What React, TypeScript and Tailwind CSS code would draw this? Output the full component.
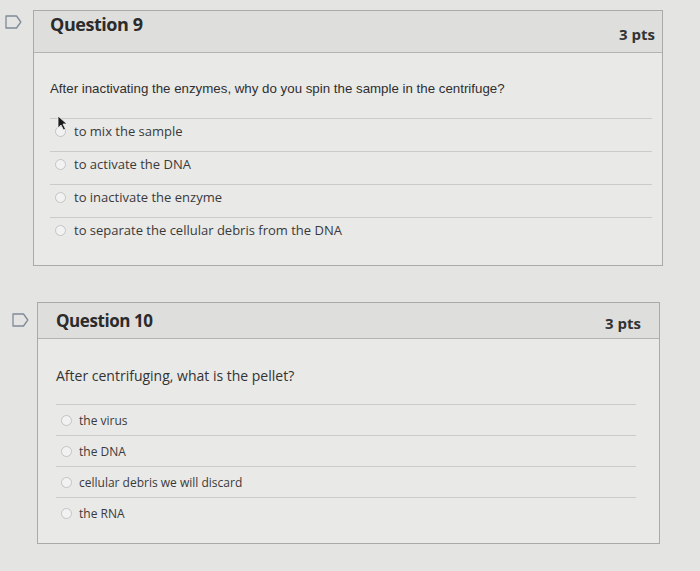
import React from "react";

interface QuestionProps {
  number: number;
  prompt: string;
  answers: string[];
  rowClass: string;
  flagClass: string;
  cardClass: string;
  headerClass: string;
  titleClass: string;
  bodyClass: string;
  promptClass: string;
  answerClass: string;
  rowHeight: string;
  showCursor?: boolean;
}

export default function App() {
  return (
    <div className="min-h-[571px] w-[700px] bg-[#e4e4e3] pt-[10px] font-['Open_Sans',sans-serif] text-[#3b3b3b]">
      <QuestionBlock
        number={9}
        prompt="After inactivating the enzymes, why do you spin the sample in the centrifuge?"
        answers={[
          "to mix the sample",
          "to activate the DNA",
          "to inactivate the enzyme",
          "to separate the cellular debris from the DNA",
        ]}
        rowClass="pl-[5px] gap-[11px]"
        flagClass="pt-[5px]"
        cardClass="w-[630px] h-[256px]"
        headerClass="h-[42px] pl-[16px] pr-[7px]"
        titleClass="text-[18px] -mt-[14px]"
        bodyClass="pl-[16px] pr-[10px] pt-[27px]"
        promptClass="font-['Liberation_Sans',Arial,sans-serif] text-[13.3px] leading-[18px] text-[#2f2f2f] mb-[20px]"
        answerClass="text-[13px] -mt-[7px] gap-[8px]"
        rowHeight="h-[33px]"
        showCursor
      />

      <div className="h-[36px]" />

      <QuestionBlock
        number={10}
        prompt="After centrifuging, what is the pellet?"
        answers={["the virus", "the DNA", "cellular debris we will discard", "the RNA"]}
        rowClass="pl-[12px] gap-[8px]"
        flagClass="pt-[11px]"
        cardClass="w-[623px] h-[242px]"
        headerClass="h-[36px] pl-[18px] pr-[18px]"
        titleClass="text-[17px]"
        bodyClass="pl-[18px] pr-[23px] pt-[27px]"
        promptClass="text-[14px] leading-[20px] text-[#333] mb-[18px]"
        answerClass="text-[12px] mt-[1px] gap-[7px]"
        rowHeight="h-[31px]"
      />
    </div>
  );
}

/* ------------------------------- COMPONENTS ------------------------------- */

function QuestionBlock(props: QuestionProps) {
  return (
    <div className={`flex items-start ${props.rowClass}`}>
      <div className={`${props.flagClass} flex-shrink-0`}>
        <FlagIcon />
      </div>

      <div className={`${props.cardClass} bg-[#e9e9e8] border border-[#aaaaaa] flex flex-col`}>
        {/* Header */}
        <div
          className={`${props.headerClass} bg-[#dededd] border-b border-[#b3b3b3] flex items-center justify-between`}
        >
          <span className={`${props.titleClass} font-bold text-[#2b2b2b] tracking-tight`}>
            Question {props.number}
          </span>
          <span className="text-[15px] font-bold text-[#333] mt-[6px]">3 pts</span>
        </div>

        {/* Body */}
        <div className={props.bodyClass}>
          <p className={props.promptClass}>{props.prompt}</p>

          <div className="flex flex-col">
            {props.answers.map((answer, idx) => (
              <div
                key={idx}
                className={`${props.rowHeight} relative flex items-center pl-[5px] border-t border-[#cbcbca]`}
              >
                <label className={`${props.answerClass} flex items-center text-[#3a3a3a]`}>
                  <span className="w-[11px] h-[11px] rounded-full border border-[#c4c4c4] bg-[#f2f2f2] flex-shrink-0" />
                  <span>{answer}</span>
                </label>

                {props.showCursor && idx === 0 && (
                  <svg
                    className="absolute left-[7px] top-[-4px]"
                    width="11"
                    height="16"
                    viewBox="0 0 11 16"
                  >
                    <path d="M1 1 L1 13 L4 10 L6.5 15 L8.5 14 L6 9 L10 9 Z" fill="#1a1a1a" stroke="#f2f2f2" strokeWidth="0.8" />
                  </svg>
                )}
              </div>
            ))}
          </div>
        </div>
      </div>
    </div>
  );
}

function FlagIcon() {
  return (
    <svg width="17" height="14" viewBox="0 0 17 14" fill="none">
      <path d="M1 1 H11.5 L15.8 7 L11.5 13 H1 Z" stroke="#7f8a99" strokeWidth="1.3" strokeLinejoin="round" />
    </svg>
  );
}
